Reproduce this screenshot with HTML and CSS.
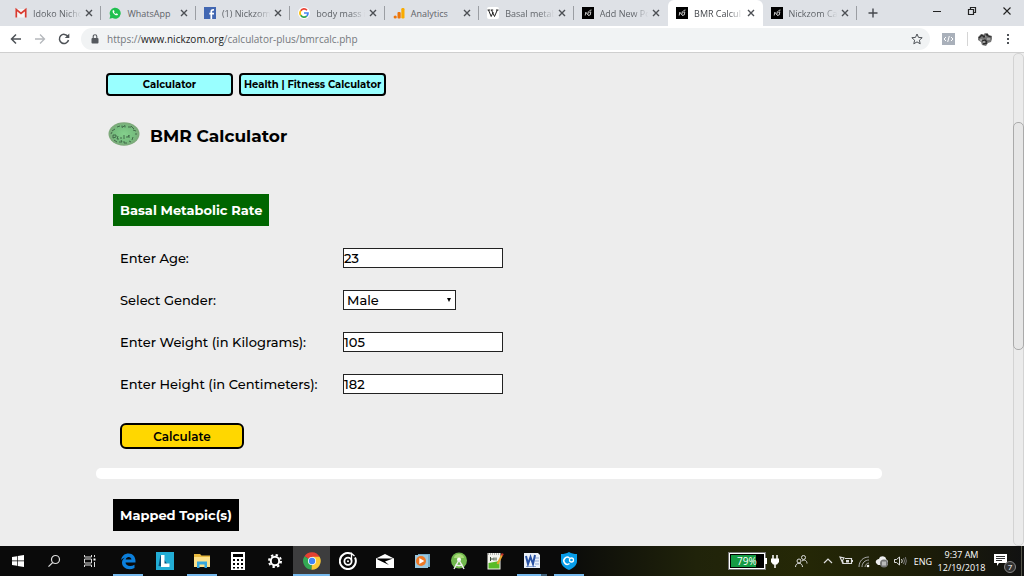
FILE: index.html
```
<!DOCTYPE html>
<html lang="en">
<head>
	<meta charset="utf-8">
	<meta name="viewport" content="width=device-width, initial-scale=1.0">
	<title>BMR Calculator</title>
	<link rel="stylesheet" href="styles.css">
</head>
<body>
	<!-- icons used more than once -->
	<svg class="defs" aria-hidden="true">
		<symbol id="close" viewBox="0 0 8 8"><path d="M1 1l6 6M7 1L1 7" stroke="#4c4f54" stroke-width="1.4"/></symbol>
		<symbol id="nickzom" viewBox="0 0 12 12">
			<path d="M0 0h12v12H0z"/>
			<path d="M3.200 8.500l.6-3.300 2 2.600.6-3.500M6 8.500l2.300-.6.500-3-2 .3M7.500 3.500l2-.5" fill="none" stroke="#ddd" stroke-width=".9"/>
		</symbol>
	</svg>

	<div class="tabstrip">
		<div class="tabs">
			<div class="tab">
				<svg class="favicon" viewBox="0 0 12 12"><path d="M1 2h10v8.500H1z" fill="#f4f4f4"/><path d="M1.300 10.500V2.500L6 6.500l4.700-4v8" fill="none" stroke="#d93b30" stroke-width="1.700"/></svg>
				<span class="title">Idoko Nicho</span>
				<button class="close" aria-label="Close tab"><svg><use href="#close"/></svg></button>
			</div>
			<div class="tab">
				<svg class="favicon" viewBox="0 0 12 12"><path d="M.5 11.700l.8-3A5.500 5.500 0 1 1 3.500 11z" fill="#1fc04f"/><path d="M4 3.200c-1.500 1.500 1.500 5.500 4.300 5 .8-.5.7-1.200.5-1.300l-1.300-.6-.7.800C5.800 6.700 5.200 6 5 5.300l.5-.7L5 3.200z" fill="#fff"/></svg>
				<span class="title whole">WhatsApp</span>
				<button class="close" aria-label="Close tab"><svg><use href="#close"/></svg></button>
			</div>
			<div class="tab">
				<svg class="favicon" viewBox="0 0 12 12"><path d="M0 0h12v12H0z" fill="#4267b2"/><path d="M7.300 12V4.500c0-1.200.6-1.700 2.700-1.500M5.300 6.700H10" fill="none" stroke="#fff" stroke-width="1.700"/></svg>
				<span class="title">(1) Nickzom</span>
				<button class="close" aria-label="Close tab"><svg><use href="#close"/></svg></button>
			</div>
			<div class="tab">
				<svg class="favicon" viewBox="0 0 12 12"><circle cx="6" cy="6" r="6" fill="#fff"/><g fill="none" stroke-width="1.700"><path d="M2.700 3.700A4 4 0 0 1 9 3.200" stroke="#ea4335"/><path d="M2.700 3.700a4 4 0 0 0 0 4.600" stroke="#fbbc05"/><path d="M2.700 8.300a4 4 0 0 0 6 .8" stroke="#34a853"/><path d="M8.700 9.100A4 4 0 0 0 10 6H6" stroke="#4285f4"/></g></svg>
				<span class="title">body mass i</span>
				<button class="close" aria-label="Close tab"><svg><use href="#close"/></svg></button>
			</div>
			<div class="tab">
				<svg class="favicon" viewBox="0 0 12 12"><circle cx="2.200" cy="10" r="1.600" fill="#ed750a"/><rect x="4.500" y="5" width="3.200" height="6.500" rx="1" fill="#ed750a"/><rect x="8.300" y="1" width="3.200" height="10.500" rx="1.200" fill="#f9ab00"/></svg>
				<span class="title whole">Analytics</span>
				<button class="close" aria-label="Close tab"><svg><use href="#close"/></svg></button>
			</div>
			<div class="tab">
				<svg class="favicon" viewBox="0 0 12 12"><rect width="12" height="12" rx="2" fill="#fff"/><path d="M1.500 3L4.200 9.500 6.200 5M4.500 3l3 6.500L10.300 3M.5 3h2.500M3.700 3h2.500M9 3h2.500" fill="none" stroke="#222" stroke-width="1"/></svg>
				<span class="title">Basal metab</span>
				<button class="close" aria-label="Close tab"><svg><use href="#close"/></svg></button>
			</div>
			<div class="tab before-active">
				<svg class="favicon"><use href="#nickzom"/></svg>
				<span class="title">Add New Po</span>
				<button class="close" aria-label="Close tab"><svg><use href="#close"/></svg></button>
			</div>
			<div class="tab active">
				<svg class="favicon"><use href="#nickzom"/></svg>
				<span class="title">BMR Calcul</span>
				<button class="close" aria-label="Close tab"><svg><use href="#close"/></svg></button>
			</div>
			<div class="tab">
				<svg class="favicon"><use href="#nickzom"/></svg>
				<span class="title">Nickzom Ca</span>
				<button class="close" aria-label="Close tab"><svg><use href="#close"/></svg></button>
			</div>
		</div>
		<button class="new-tab" aria-label="New tab"><svg viewBox="0 0 10 10"><path d="M5 .5v9M.5 5h9" stroke="#45484d" stroke-width="1.400"/></svg></button>
		<div class="window-buttons">
			<button aria-label="Minimize"><svg viewBox="0 0 10 10"><path d="M1 5.500h8" stroke="#222"/></svg></button>
			<button aria-label="Restore"><svg viewBox="0 0 10 10"><path d="M1.500 3.500h5v5h-5zM3.500 3V1.500h5v5H7" fill="none" stroke="#222" stroke-width="1.200"/></svg></button>
			<button aria-label="Close"><svg viewBox="0 0 10 10"><path d="M1.500 1.500l7 7M8.500 1.500l-7 7" stroke="#222" stroke-width="1.100"/></svg></button>
		</div>
	</div>

	<div class="toolbar">
		<button class="nav" aria-label="Back"><svg viewBox="0 0 12 12"><path d="M11 6H1.500M6 1.500L1.500 6 6 10.500" fill="none" stroke="#4e5257" stroke-width="1.500"/></svg></button>
		<button class="nav" aria-label="Forward"><svg viewBox="0 0 12 12"><path d="M1 6h9.500M6 1.500L10.500 6 6 10.500" fill="none" stroke="#b5b8bc" stroke-width="1.300"/></svg></button>
		<button class="nav" aria-label="Reload"><svg viewBox="0 0 12 12"><path d="M9.900 3.500A4.600 4.600 0 1 0 10.500 7" fill="none" stroke="#4e5257" stroke-width="1.500"/><path d="M11.300.5V5H6.800z" fill="#4e5257"/></svg></button>
		<div class="address">
			<svg class="lock" viewBox="0 0 8 10"><rect x=".5" y="4" width="7" height="5.500" rx="1" fill="#55595e"/><path d="M2.200 4V2.500a1.800 1.800 0 0 1 3.600 0V4" fill="none" stroke="#55595e" stroke-width="1.100"/></svg>
			<span class="url">https://<b>www.nickzom.org</b>/calculator-plus/bmrcalc.php</span>
			<button class="star" aria-label="Bookmark"><svg viewBox="0 0 12 12"><path d="M6 1l1.500 3.400 3.700.3-2.800 2.500.8 3.600L6 8.900l-3.200 1.900.8-3.600L.8 4.700l3.700-.3z" fill="none" stroke="#4e5257"/></svg></button>
		</div>
		<button class="extension" aria-label="Extension"><svg viewBox="0 0 13 12"><path d="M0 0h13v12H0z" fill="#a9b0ba"/><path d="M4 4L2 6l2 2M9 4l2 2-2 2M7.300 3L5.700 9" fill="none" stroke="#fff"/></svg></button>
		<button class="profile" aria-label="Profile"><svg viewBox="0 0 14 14"><path d="M0 5l3-3 2 1 2-2 3 1 1 1 3 1v3l-1 3-3 1-2 3-4-1-1-3-3-2z" fill="#777"/><path d="M1 6l3-3 2 2 3-3 1 2 3 1M4 9l3-1 2 2M5 12l4-1" fill="none" stroke="#2a2a2a" stroke-width="1.300"/><path d="M2 8h2M7 4h1M9 7h3M5 10h2" stroke="#ccc"/></svg></button>
		<button class="menu" aria-label="Menu"><svg viewBox="0 0 4 12"><path d="M1 1h2v2H1zM1 5h2v2H1zM1 9h2v2H1z" fill="#4e5257"/></svg></button>
	</div>

	<div class="viewport">
		<main class="page">
			<nav class="crumbs">
				<a href="#calculator">Calculator</a>
				<a href="#fitness">Health | Fitness Calculator</a>
			</nav>
			<header class="heading">
				<svg class="logo" viewBox="0 0 32 24"><defs><radialGradient id="stone"><stop offset="0" stop-color="#84d08c"/><stop offset=".7" stop-color="#76bd7e"/><stop offset="1" stop-color="#7ea67a"/></radialGradient></defs><ellipse cx="16" cy="12" rx="15.500" ry="11.700" fill="url(#stone)"/><path d="M9 5l3-1M14 3.500v2l3-2v2M20 5h3M23 4l3 3M25 8l3 1M4 9l3-2M5 13v3l3-1v-2zM10 14l-1 3h2M12 16h2M16 13v4M18 15h2l1-2v3M6 18l3 2M11 20h3l-1-2M16 19v2h3M21 19l2 1M25 15l-1 3M3 12l1-2M27 12h2" fill="none" stroke="#36563e" stroke-width=".8"/></svg>
				<h1>BMR Calculator</h1>
			</header>

			<form class="bmr">
				<h2 class="section">Basal Metabolic Rate</h2>
				<div class="fields">
					<label for="age">Enter Age:</label>
					<input id="age" type="text" value="23">
					<label for="gender">Select Gender:</label>
					<div class="select">
						<select id="gender">
							<option>Male</option>
							<option>Female</option>
						</select>
					</div>
					<label for="weight">Enter Weight (in Kilograms):</label>
					<input id="weight" type="text" value="105">
					<label for="height">Enter Height (in Centimeters):</label>
					<input id="height" type="text" value="182">
				</div>
				<button class="calculate" type="button">Calculate</button>
			</form>
			<hr>
			<h2 class="section topics">Mapped Topic(s)</h2>
		</main>
		<div class="scrollbar"><div class="thumb"></div></div>
	</div>

	<footer class="taskbar">
		<div class="system">
			<button aria-label="Start"><svg viewBox="0 0 14 14"><path d="M1 3l5-.8v4.400H1zM6.700 2.100L13 1v5.600H6.700zM1 7.300h5v4.400L1 11zM6.700 7.300H13V13l-6.300-1z" fill="#fff"/></svg></button>
			<button aria-label="Search"><svg viewBox="0 0 14 14"><circle cx="8.500" cy="5.500" r="4" fill="none" stroke="#ddd" stroke-width="1.200"/><path d="M5.700 8.500L1.500 12.700" stroke="#ddd" stroke-width="1.200"/></svg></button>
			<button aria-label="Task view"><svg viewBox="0 0 14 14"><path d="M1.500 1v2h7V1M1.500 5h7v4h-7zM1.500 13v-2h7v2M11.500 1v2M11.500 8v5" fill="none" stroke="#ddd"/><path d="M10.500 4.500h2v2h-2z" fill="#fff"/></svg></button>
		</div>
		<div class="apps">
			<button class="running" aria-label="Edge"><svg viewBox="0 0 18 18"><path d="M2 8C3 3.500 6 1.500 9.500 1.500 14 1.500 16.500 5 16.500 9v1.500h-10c.2 3.500 5 4.500 9 2.300v3.200C9 19 3 16 3 10.500 3 8 4.500 6.500 6.500 5.500 4.500 6 3 7 2 8zM6.700 7.600h5.800c-.2-3.600-5.300-3.600-5.800 0z" fill="#0b7fdc" fill-rule="evenodd"/></svg></button>
			<button aria-label="Lynda"><svg viewBox="0 0 18 18"><path d="M0 0h18v18H0z" fill="#22add5"/><path d="M4.500 3L2.500 14l11 1z" fill="#074f78"/><path d="M5 3h3.500v8.500h5V15H5z" fill="#fff"/></svg></button>
			<button class="running" aria-label="File Explorer"><svg viewBox="0 0 18 18"><path d="M1 2h6l1.500 1.500H17V15H1z" fill="#e8b93e"/><path d="M1 5h16v10H1z" fill="#fbe08a"/><path d="M4 16V9.500h10V16h-2.500v-3.500h-5V16z" fill="#35a7dd"/></svg></button>
			<button aria-label="Calculator"><svg viewBox="0 0 18 18"><path d="M2 0h14v18H2z" fill="#fff"/><path d="M4 2h10v3H4zM4 7h2v2H4zM8 7h2v2H8zM12 7h2v2h-2zM4 11h2v2H4zM8 11h2v2H8zM12 11h2v2h-2zM4 15h2v1.500H4zM8 15h2v1.500H8zM12 15h2v1.500h-2z"/></svg></button>
			<button aria-label="Settings"><svg viewBox="0 0 18 18"><circle cx="9" cy="9" r="4.200" fill="none" stroke="#fff" stroke-width="2"/><circle cx="9" cy="9" r="6" fill="none" stroke="#fff" stroke-width="2" stroke-dasharray="2.350 2.350"/></svg></button>
			<button class="running current" aria-label="Chrome"><svg viewBox="0 0 18 18"><path d="M9 9L1.500 4.300A8.700 8.700 0 0 1 16.600 4.800z" fill="#e34133"/><path d="M9 9L1.500 4.300A8.700 8.700 0 0 0 8.500 17.700z" fill="#34a853"/><path d="M9 9L8.500 17.700A8.700 8.700 0 0 0 16.600 4.800H9z" fill="#fbc934"/><circle cx="9" cy="9" r="4" fill="#fff"/><circle cx="9" cy="9" r="3.200" fill="#4285f4"/></svg></button>
			<button aria-label="Groove Music"><svg viewBox="0 0 18 18"><g fill="none" stroke="#fff"><path d="M12 1.700A8 8 0 1 0 16 5.500" stroke-width="2"/><circle cx="9" cy="9.300" r="3.600" stroke-width="1.800"/><path d="M12.500 9V1.500l3 2.500" stroke-width="1.300"/></g><circle cx="9" cy="9.300" r="1" fill="#fff"/></svg></button>
			<button aria-label="Mail"><svg viewBox="0 0 18 18"><path d="M0 6.500L9 2l9 4.500V16H0z" fill="#fff"/><path d="M1 6.500h16L9 9.500l4 3.500L1.500 7.500z"/></svg></button>
			<button aria-label="Media Player"><svg viewBox="0 0 18 18"><path d="M5 2h12v13H5z" fill="#75adca"/><path d="M2 3h13v13H2z" fill="#9bc8df"/><circle cx="8" cy="9" r="5" fill="#ee7926"/><path d="M6.300 6v6l5-3z" fill="#fff"/></svg></button>
			<button aria-label="Android Studio"><svg viewBox="0 0 18 18"><circle cx="9" cy="8.500" r="8" fill="#71b84d"/><path d="M4 6a5 4 0 0 1 10 0z" fill="#a8db78"/><circle cx="9" cy="7.500" r="2" fill="#fff"/><path d="M9 8L4 17M9 8l5 9M5.500 12.500c2 1.500 5 1.500 7 0" fill="none" stroke="#eee" stroke-width="1.500"/></svg></button>
			<button aria-label="Notepad++"><svg viewBox="0 0 18 18"><path d="M1.500 1h13v16.500h-13z" fill="#f5f5ef"/><path d="M2.500 11l11-2v7.500h-11z" fill="#58bb27"/><path d="M2 2h12" stroke="#777" stroke-dasharray="1 1"/><path d="M4.500 5v4M4.500 7h3M8 5.500v3M10 5.500v3" stroke="#3b4b38"/><path d="M16 3l-4.500 9" stroke="#e9a42e" stroke-width="2"/><path d="M15.300 2l2 1" stroke="#c4332b" stroke-width="2"/></svg></button>
			<button class="running stacked" aria-label="Word"><svg viewBox="0 0 18 18"><path d="M1 1h14l2 2v13H1z" fill="#eaf0f8"/><path d="M12 6h4M12 9h4M12 12h4M3 14.500h10" stroke="#8fa7d4"/><path d="M3 4l2 8 2.500-7L10 12l2-9" fill="none" stroke="#2851a3" stroke-width="2"/></svg></button>
			<button class="running" aria-label="VPN"><svg viewBox="0 0 18 18"><path d="M9 0c2.500 1.500 5 2 8 2v7c0 4-3 7-8 9-5-2-8-5-8-9V2c3 0 5.500-.5 8-2z" fill="#089de9"/><path d="M9.500 11.500a3.500 3.500 0 1 1 0-5.500" fill="none" stroke="#fff" stroke-width="1.500"/><circle cx="11.500" cy="8" r="2" fill="none" stroke="#fff" stroke-width="1.300"/></svg></button>
		</div>
		<div class="tray">
			<div class="battery"><span class="charge">79%</span></div>
			<svg class="plug" viewBox="0 0 10 14"><path d="M3 1v4M7 1v4M5 10v4" stroke="#fff" stroke-width="1.500"/><path d="M1 4.500h8V8L7 10.500H3L1 8z" fill="#fff"/></svg>
			<button class="people" aria-label="People"><svg viewBox="0 0 14 14"><g fill="none" stroke="#ddd"><circle cx="5" cy="7" r="2"/><path d="M1.500 13c0-5 7-5 7 0"/><circle cx="9.500" cy="3.500" r="2"/><path d="M8 7c2.500-2 5-.5 5 2.500"/></g></svg></button>
			<button aria-label="Hidden icons"><svg viewBox="0 0 14 14"><path d="M3 9l4-4 4 4" fill="none" stroke="#ddd" stroke-width="1.200"/></svg></button>
			<button aria-label="Power"><svg viewBox="0 0 14 14"><path d="M6 4.500h6.500v5H4v-2M13.500 6v2M1 3l4 1-2 3.500zM3.500 6.500v3" fill="none" stroke="#ddd" stroke-width="1.200"/><path d="M7 6h3v2.500H7z" fill="#ddd"/></svg></button>
			<button aria-label="Network"><svg viewBox="0 0 14 14"><g fill="none" stroke="#aaa"><path d="M2 13C2 7 6 3 12 3M5 13c0-4 3-7 7-7M8 13c0-2 2-4 4-4"/></g><circle cx="11" cy="12" r="1.300" fill="#fff"/></svg></button>
			<button aria-label="Sync"><svg viewBox="0 0 14 14"><path d="M1 9C0 6 3 5 4 5c1-4 7-3 7 0l2 2v4H3z" fill="#eee"/><circle cx="9" cy="9.500" r="4" fill="#777"/><path d="M8 7.500v4M10 7.500v4" stroke="#fff"/></svg></button>
			<button aria-label="Volume"><svg viewBox="0 0 14 14"><path d="M1.500 5.500h2l3-2.500v8l-3-2.500h-2z" fill="none" stroke="#ddd"/><path d="M8.500 5q1.500 2 0 4" fill="none" stroke="#ddd"/><path d="M10.500 4q2 3 0 6M12.300 3q2 4 0 8" fill="none" stroke="#777"/></svg></button>
			<span class="lang">ENG</span>
			<div class="clock"><span>9:37 AM</span><span>12/19/2018</span></div>
			<button class="notifications" aria-label="Notifications"><svg viewBox="0 0 20 20"><path d="M1 3h13v9H6l-2 3v-3H1z" fill="#fff"/><path d="M3 5.500h9M3 7.500h9M3 9.500h6" stroke="#333"/></svg><span class="badge">7</span></button>
		</div>
	</footer>
</body>
</html>
```
FILE: styles.css
```
* {
	box-sizing: border-box;
}
body {
	margin: 0;
	height: 100vh;
	display: flex;
	flex-direction: column;
	overflow: hidden;
	font-family: "Open Sans", "Noto Sans", sans-serif;
	background: #ededed;
	color: #000;
}
button {
	border: 0;
	padding: 0;
	background: none;
	font: inherit;
	color: inherit;
	display: flex;
	align-items: center;
	justify-content: center;
}
svg {
	display: block;
	flex: none;
}
.defs {
	position: absolute;
	width: 0;
	height: 0;
}

/* Tabs */
.tabstrip {
	flex: none;
	height: 26px;
	display: flex;
	padding-left: 7px;
	background: #dee1e6;
}
.tabs {
	flex: 0 1 850px;
	display: flex;
	min-width: 0;
}
.tab {
	flex: 1;
	min-width: 0;
	display: flex;
	align-items: center;
	gap: 6px;
	padding: 0 8px;
	font-size: 9px;
	color: #5f6368;
	background: linear-gradient(#9b9ea3, #9b9ea3) right center / 1px 14px no-repeat;
}
.tab.before-active {
	background: none;
}
.tab.active {
	background: #fff;
	border-radius: 6px 6px 0 0;
	color: #45484d;
}
.favicon {
	width: 12px;
	height: 12px;
}
.title {
	flex: 1;
	margin-right: -5px;
	white-space: nowrap;
	-webkit-mask-image: linear-gradient(to right, #000 65%, transparent 95%);
	mask-image: linear-gradient(to right, #000 65%, transparent 95%);
}
.title.whole {
	-webkit-mask-image: none;
	mask-image: none;
}
.close svg {
	width: 8px;
	height: 8px;
}
.new-tab {
	width: 32px;
}
.new-tab svg {
	width: 10px;
	height: 10px;
}
.window-buttons {
	margin-left: auto;
	display: flex;
	height: 22px;
}
.window-buttons button {
	width: 35px;
}
.window-buttons svg {
	width: 10px;
	height: 10px;
}

/* Address bar */
.toolbar {
	flex: none;
	height: 27px;
	display: flex;
	align-items: center;
	padding: 0 14px 0 4px;
	background: #fff;
	border-bottom: 1px solid #cfcfcf;
}
.nav {
	width: 24px;
}
.nav svg {
	width: 12px;
	height: 12px;
}
.address {
	flex: 1;
	height: 22px;
	display: flex;
	align-items: center;
	gap: 8px;
	margin-left: 5px;
	padding: 0 7px 0 10px;
	border-radius: 11px;
	background: #f1f3f4;
}
.lock {
	width: 8px;
	height: 10px;
}
.url {
	flex: 1;
	font-size: 10px;
	color: #74787d;
}
.url b {
	font-weight: normal;
	color: #222;
}
.star svg {
	width: 12px;
	height: 12px;
}
.extension {
	width: 37px;
}
.extension svg {
	width: 13px;
	height: 12px;
}
.profile {
	padding-left: 10px;
	border-left: 1px solid #d5d5d5;
}
.profile svg {
	width: 14px;
	height: 14px;
}
.menu {
	margin-left: 14px;
}
.menu svg {
	width: 4px;
	height: 12px;
}

/* Page */
.viewport {
	flex: 1;
	min-height: 0;
	display: flex;
	overflow: hidden;
}
.page {
	flex: 1;
	padding: 20px 131px 0 96px;
	font-family: Montserrat, Inter, sans-serif;
}
.crumbs {
	display: flex;
	gap: 6px;
	padding-left: 10px;
}
.crumbs a {
	min-width: 127px;
	height: 23px;
	padding: 0 3px;
	border: 2px solid #000;
	border-radius: 4px;
	background: #9ff;
	font-size: 10px;
	font-weight: 700;
	line-height: 19px;
	text-align: center;
	text-decoration: none;
	color: #000;
}
.heading {
	display: flex;
	gap: 10px;
	margin-top: 26px;
	padding-left: 12px;
}
.logo {
	width: 32px;
	height: 24px;
}
h1 {
	margin: 0;
	font-size: 17px;
	font-weight: 700;
	line-height: 28px;
}
.bmr {
	margin-top: 44px;
}
.section {
	width: fit-content;
	margin: 0 0 0 17px;
	padding: 0 7px;
	background: #060;
	color: #fff;
	font-size: 13px;
	font-weight: 700;
	line-height: 32px;
}
.fields {
	display: grid;
	grid-template-columns: 217px 160px;
	grid-auto-rows: 20px;
	row-gap: 22px;
	column-gap: 6px;
	margin: 22px 0 0 24px;
	font-size: 13px;
	font-weight: 500;
	line-height: 20px;
}
.fields input,
.fields select {
	width: 100%;
	height: 20px;
	padding: 0;
	border: 1px solid #222;
	border-radius: 0;
	background: #fff;
	font: inherit;
	line-height: 18px;
	color: #000;
}
.select {
	position: relative;
	width: 113px;
}
.fields select {
	appearance: none;
	padding: 0 3px;
}
.select::after {
	content: "";
	position: absolute;
	right: 5px;
	top: 8px;
	border: 2px solid transparent;
	border-top: 4px solid #000;
	border-bottom: 0;
	pointer-events: none;
}
.calculate {
	width: 124px;
	height: 26px;
	margin: 29px 0 0 24px;
	border: 2px solid #000;
	border-radius: 6px;
	background: gold;
	font-size: 12px;
	font-weight: 600;
}
hr {
	height: 11px;
	margin: 19px 0 20px;
	border: 0;
	border-radius: 5px;
	background: #fff;
}
.topics {
	background: #000;
}
.scrollbar {
	flex: none;
	width: 11px;
	padding-top: 68px;
	border: 1px solid #d3d3d3;
	border-radius: 5px;
	background: #ebebeb;
}
.thumb {
	height: 228px;
	margin: 0 -1px;
	border: 1px solid #aaa;
	border-radius: 5px;
	background: #e6e6e6;
}

/* Taskbar */
.taskbar {
	flex: none;
	height: 30px;
	display: flex;
	background: linear-gradient(to right, #0a0a0a 55%, #20230a 68%, #252806 78%, #1c1d08 90%, #111);
	color: #fff;
}
.taskbar button {
	height: 30px;
}
.system {
	display: flex;
	margin-right: 2px;
}
.system button {
	width: 36px;
}
.system svg {
	width: 14px;
	height: 14px;
}
.apps {
	flex: 0 1 477px;
	display: flex;
}
.apps button {
	flex: 1;
}
.apps svg {
	width: 18px;
	height: 18px;
}
.apps .running {
	background: linear-gradient(#76b9ed, #76b9ed) center bottom / 30px 2px no-repeat;
}
.apps .current {
	background: linear-gradient(#76b9ed, #76b9ed) center bottom / 100% 2px no-repeat #3d3d3e;
}
.apps .stacked {
	background: linear-gradient(to right, #76b9ed 80%, #41617a 80%) center bottom / 30px 2px no-repeat;
}
.tray {
	flex: none;
	display: flex;
	align-items: center;
	margin-left: auto;
	margin-right: 2px;
	padding-right: 2px;
	border-right: 1px solid #55564a;
	font-size: 9px;
}
.tray button {
	width: 18px;
}
.tray svg {
	width: 14px;
	height: 14px;
}
.battery {
	position: relative;
	width: 36px;
	height: 16px;
	padding: 1px;
	border: 1px solid #fff;
	outline: 1px solid #777;
	background: #000;
}
.battery::after {
	content: "";
	position: absolute;
	right: -3px;
	top: 4px;
	width: 2px;
	height: 6px;
	background: #fff;
}
.charge {
	display: block;
	width: 79%;
	height: 12px;
	background: #169b45;
	padding-left: 6px;
	font-size: 10px;
	line-height: 12px;
}
.tray .plug {
	width: 10px;
	margin: 0 12px 0 5px;
}
.tray .people {
	margin-right: 9px;
}
.lang {
	width: 28px;
	text-align: center;
}
.clock {
	width: 49px;
	display: flex;
	flex-direction: column;
	align-items: center;
	line-height: 13px;
}
.tray .notifications {
	position: relative;
	width: 33px;
}
.notifications svg {
	width: 20px;
	height: 20px;
}
.badge {
	position: absolute;
	right: 3px;
	bottom: 3px;
	width: 12px;
	height: 12px;
	border: 1px solid #888;
	border-radius: 50%;
	background: #333;
	font-size: 8px;
	line-height: 10px;
}
```
